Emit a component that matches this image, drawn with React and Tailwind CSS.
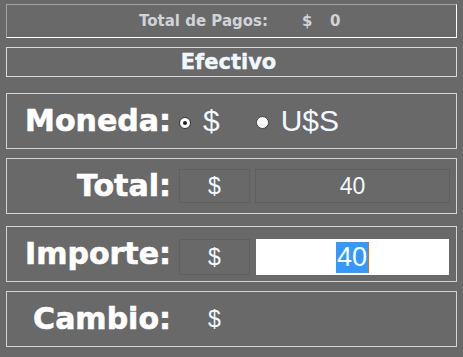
import React from 'react';

const label = "w-[164px] shrink-0 text-right font-['DejaVu_Sans',sans-serif] font-bold text-[30px] leading-none text-white [-webkit-text-stroke:0.6px_white]";
const value = "font-['Liberation_Sans',Arial,sans-serif] text-[#f0f8ff] leading-none";
const box = "h-[56px] border border-[#d4d4d4] flex items-center";

const App = () => {
    return (
        <div className="w-[463px] h-[357px] bg-[#696969] px-[6px] pt-[4px] overflow-hidden">
            {/* Total de pagos */}
            <div className="h-[34px] border border-t-[#a3a3a3] border-l-[#a3a3a3] border-b-white border-r-white flex items-center pl-[132px] font-['DejaVu_Sans',sans-serif] font-bold text-[15px] text-[#d0d3d8] leading-none">
                <span className="w-[163px] shrink-0">Total de Pagos:</span>
                <span className="w-[28px] shrink-0">$</span>
                <span>0</span>
            </div>

            {/* Efectivo */}
            <div className="mt-[9px] h-[30px] border border-[#dadada] flex items-center justify-center">
                <span className="font-['DejaVu_Sans',sans-serif] font-bold text-[21px] leading-none text-[#f0f8ff] -ml-[6px] [-webkit-text-stroke:0.4px_#f0f8ff]">Efectivo</span>
            </div>

            {/* Moneda */}
            <div className={`mt-[16px] ${box}`}>
                <span className={label}>Moneda:</span>
                <span className="ml-[8px] mt-[3px] w-[12px] h-[12px] rounded-full bg-white border border-[#333] flex items-center justify-center">
                    <span className="w-[4px] h-[4px] rounded-full bg-[#222]"></span>
                </span>
                <span className={`${value} ml-[12px] text-[30px]`}>$</span>
                <span className="ml-[36px] mt-[3px] w-[13px] h-[13px] rounded-full bg-white border border-[#444]"></span>
                <span className={`${value} ml-[12px] text-[30px]`}>U$S</span>
            </div>

            {/* Total */}
            <div className={`mt-[9px] ${box}`}>
                <span className={label}>Total:</span>
                <div className="ml-[8px] w-[71px] h-[34px] border border-[#5f5f5f] flex items-center justify-center">
                    <span className={`${value} text-[23px]`}>$</span>
                </div>
                <div className="ml-[5px] w-[195px] h-[34px] border border-[#5f5f5f] flex items-center justify-center">
                    <span className={`${value} text-[23px]`}>40</span>
                </div>
            </div>

            {/* Importe */}
            <div className={`mt-[12px] ${box}`}>
                <span className={label}>Importe:</span>
                <div className="ml-[8px] mt-[6px] w-[71px] h-[36px] border border-[#5f5f5f] flex items-center justify-center">
                    <span className={`${value} text-[23px]`}>$</span>
                </div>
                <div className="ml-[6px] mt-[6px] w-[193px] h-[36px] bg-white flex items-center justify-center">
                    <span className="h-[31px] px-[1px] bg-[#3399ff] border-r border-r-[#e07000] flex items-center font-['Liberation_Sans',Arial,sans-serif] text-[27px] leading-none text-white">40</span>
                </div>
            </div>

            {/* Cambio */}
            <div className={`mt-[9px] ${box}`}>
                <span className={label}>Cambio:</span>
                <div className="ml-[8px] w-[71px] flex justify-center">
                    <span className={`${value} text-[23px]`}>$</span>
                </div>
            </div>
        </div>
    );
};

export default App;
